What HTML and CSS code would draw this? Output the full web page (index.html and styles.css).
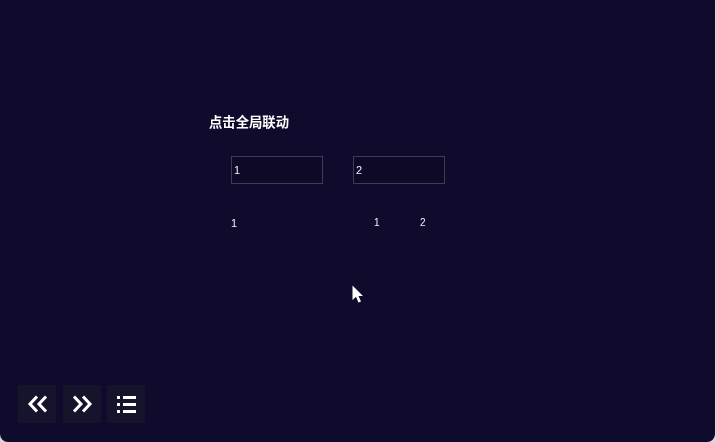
FILE: index.html
```html
<!doctype html>
<html lang="zh">
<head>
  <meta charset="UTF-8">
  <title>点击全局联动</title>
  <link rel="stylesheet" href="styles.css">
</head>
<body>
  <main class="stage">
    <section class="demo">
      <h1>点击全局联动</h1>
      <div class="inputs">
        <input class="box" type="text" value="1">
        <input class="box" type="text" value="2">
      </div>
      <div class="outputs">
        <span class="out-a">1</span>
        <span class="out-b">1</span>
        <span class="out-c">2</span>
      </div>
    </section>

    <nav class="tools">
      <a class="tool" href="#"><svg viewBox="0 0 24 24"><path d="M12 4.500 5 12 12 19.500M21 4.500 14 12 21 19.500"/></svg></a>
      <a class="tool" href="#"><svg viewBox="0 0 24 24"><path d="M4 4.500 11 12 4 19.500M13 4.500 20 12 13 19.500"/></svg></a>
      <a class="tool" href="#"><svg viewBox="0 0 24 24"><path d="M9 5.500H22M9 12.500H22M9 19.500H22M3 5.500H6M3 12.500H6M3 19.500H6"/></svg></a>
    </nav>

    <svg class="cursor" viewBox="0 0 12 19"><path d="M0.500 0.500V15L4 11.800 6.500 17.500 9 16.500 6.500 11H11Z"/></svg>
  </main>
</body>
</html>
```

FILE: styles.css
```css
html, body { margin: 0; height: 100%; }
body { background: #d8d8e0; overflow: hidden; font-family: "Liberation Sans", "Noto Sans CJK SC", sans-serif; }

.stage { position: relative; box-sizing: border-box; width: 715px; height: 442px; padding: 115px 0 0 209px; background: #100b2c; border-radius: 0 0 8px 8px; color: #f2f2f6; }
.demo { will-change: transform; }

h1 { margin: 0; font-size: 13.33px; line-height: 16px; font-weight: bold; color: #fff; }

.inputs { display: flex; gap: 30px; margin: 25px 0 0 22px; }
.box { box-sizing: border-box; width: 92px; height: 28px; padding: 0 2px; background: #0d0927; border: 1px solid #3f3b57; border-radius: 0; outline: 0; color: #f2f2f6; font: 11px "Liberation Sans", sans-serif; }

.outputs { display: flex; align-items: flex-start; height: 14px; margin: 32px 0 0 22px; font-size: 11px; line-height: 14px; }
.out-a { width: 143px; }
.out-b { width: 46px; font-size: 10px; }
.out-c { font-size: 10px; }

.tools { position: absolute; left: 18px; top: 385px; display: flex; gap: 6.5px; }
.tool { display: flex; align-items: center; justify-content: center; width: 38px; height: 38px; background: #16132c; }
.tool svg { width: 24px; height: 24px; fill: none; stroke: #fff; stroke-width: 3; }

.cursor { position: absolute; left: 352px; top: 285px; width: 12px; height: 19px; fill: #fff; }
```
